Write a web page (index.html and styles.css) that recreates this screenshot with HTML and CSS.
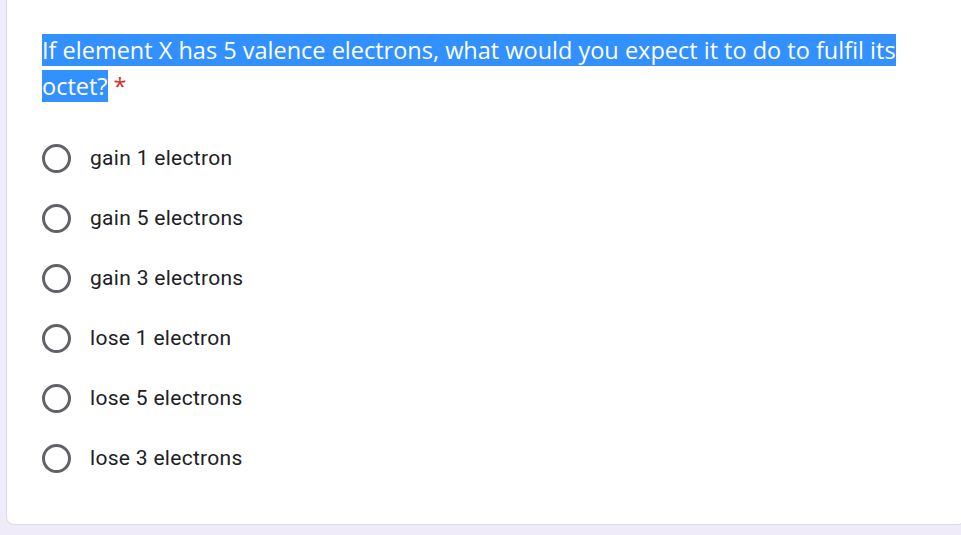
FILE: index.html
```html
<!DOCTYPE html>
<html>
<head>
<meta charset="utf-8">
<link rel="stylesheet" href="styles.css">
</head>
<body>
<div class="card">
  <div class="question"><span class="sel">If element X has 5 valence electrons, what would you expect it to do to fulfil its octet?</span> <span class="req">*</span></div>
  <div class="options">
    <label class="option"><span class="radio"></span><span class="label">gain 1 electron</span></label>
    <label class="option"><span class="radio"></span><span class="label">gain 5 electrons</span></label>
    <label class="option"><span class="radio"></span><span class="label">gain 3 electrons</span></label>
    <label class="option"><span class="radio"></span><span class="label">lose 1 electron</span></label>
    <label class="option"><span class="radio"></span><span class="label">lose 5 electrons</span></label>
    <label class="option"><span class="radio"></span><span class="label">lose 3 electrons</span></label>
  </div>
</div>
</body>
</html>
```
FILE: styles.css
```css
html, body {
  margin: 0;
  padding: 0;
  background: #f0ebf8;
  overflow: hidden;
}
.card {
  box-sizing: border-box;
  margin-left: 6px;
  width: 960px;
  height: 525px;
  background: #fff;
  border: 1px solid #dadce0;
  border-top: none;
  border-radius: 0 0 8px 8px;
  padding: 32px 40px 0 35px;
}
.question {
  font-family: "Open Sans", sans-serif;
  font-size: 23.5px;
  line-height: 36px;
  color: #202124;
  width: 870px;
}
.sel {
  background: #3390ff;
  color: #fff;
}
.req {
  color: #d93025;
}
.options {
  margin-top: 24px;
  display: flex;
  flex-direction: column;
}
.option {
  display: flex;
  align-items: center;
  height: 60px;
}
.radio {
  box-sizing: border-box;
  width: 29px;
  height: 29px;
  border: 3px solid #5f6368;
  border-radius: 50%;
  flex: none;
}
.label {
  margin-left: 19px;
  font-family: Roboto, sans-serif;
  font-size: 21px;
  letter-spacing: 0.3px;
  color: #202124;
}
```
